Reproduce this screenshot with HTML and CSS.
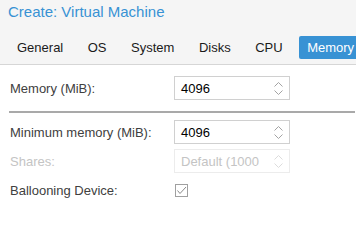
FILE: index.html
```html
<!DOCTYPE html>
<html>
<head>
<meta charset="utf-8">
<link rel="stylesheet" href="styles.css">
</head>
<body>
<div class="window">
  <div class="header">
    <div class="title">Create: Virtual Machine</div>
    <div class="tabs">
      <div class="tab">General</div>
      <div class="tab">OS</div>
      <div class="tab">System</div>
      <div class="tab">Disks</div>
      <div class="tab">CPU</div>
      <div class="tab active">Memory</div>
    </div>
  </div>
  <div class="content">
    <div class="row first">
      <div class="label">Memory (MiB):</div>
      <div class="field">
        <span class="value">4096</span>
        <span class="spin"><svg width="9" height="13" viewBox="0 0 9 13"><path d="M0.5 4.5 L4.5 0.5 L8.5 4.5 M0.5 8.5 L4.5 12.5 L8.5 8.5" fill="none" stroke="#a3a3a3" stroke-width="1"/></svg></span>
      </div>
    </div>
    <div class="sep"></div>
    <div class="row second">
      <div class="label">Minimum memory (MiB):</div>
      <div class="field">
        <span class="value">4096</span>
        <span class="spin"><svg width="9" height="13" viewBox="0 0 9 13"><path d="M0.5 4.5 L4.5 0.5 L8.5 4.5 M0.5 8.5 L4.5 12.5 L8.5 8.5" fill="none" stroke="#a3a3a3" stroke-width="1"/></svg></span>
      </div>
    </div>
    <div class="row">
      <div class="label disabled">Shares:</div>
      <div class="field off">
        <span class="value">Default (1000</span>
        <span class="spin"><svg width="9" height="13" viewBox="0 0 9 13"><path d="M0.5 4.5 L4.5 0.5 L8.5 4.5 M0.5 8.5 L4.5 12.5 L8.5 8.5" fill="none" stroke="#dcdcdc" stroke-width="1"/></svg></span>
      </div>
    </div>
    <div class="row">
      <div class="label">Ballooning Device:</div>
      <div class="check"><svg width="13" height="13" viewBox="0 0 13 13"><rect x="0.5" y="0.5" width="12" height="12" fill="#fff" stroke="#a0a0a0"/><path d="M2.5 6.5 L5 9.5 L11 3" fill="none" stroke="#8a8a8a" stroke-width="1"/></svg></div>
    </div>
  </div>
</div>
</body>
</html>
```
FILE: styles.css
```css
html, body {
  margin: 0;
  padding: 0;
  background: #ffffff;
  font-family: "Liberation Sans", Arial, sans-serif;
  font-size: 13px;
}
.window {
  width: 356px;
  height: 207px;
  overflow: hidden;
}
.header {
  background: #f5f5f5;
  padding-top: 2px;
  padding-bottom: 5px;
  border-bottom: 1px solid #d6d6d6;
}
.title {
  padding-left: 8px;
  font-size: 15px;
  line-height: 20px;
  color: #3892d4;
  white-space: nowrap;
}
.tabs {
  display: flex;
  gap: 8.5px;
  margin-top: 14px;
  padding-left: 9px;
  white-space: nowrap;
}
.tab {
  flex: none;
  padding: 0 8px;
  height: 23px;
  line-height: 23px;
  color: #1a1a1a;
  border-radius: 2px;
}
.tab.active {
  background: #3892d4;
  color: #ffffff;
}
.content {
  padding: 11px 0 0 10px;
}
.row {
  display: flex;
  align-items: center;
  height: 24px;
  margin-top: 5px;
}
.row.first {
  margin-top: 0;
}
.row.second {
  margin-top: 7px;
}
.label {
  width: 164px;
  flex: none;
  color: #404040;
  white-space: nowrap;
}
.label.disabled {
  color: #c4c4c4;
}
.sep {
  margin: 11px 1px 0 -1px;
  height: 2px;
  background: #a9a9a9;
}
.field {
  box-sizing: border-box;
  width: 116px;
  height: 24px;
  border: 1px solid #d0d0d0;
  background: #fff;
  display: flex;
  align-items: center;
}
.field.off {
  border-color: #ececec;
}
.value {
  flex: 1;
  min-width: 0;
  white-space: nowrap;
  padding-left: 6px;
  color: #000;
}
.field.off .value {
  color: #c4c4c4;
}
.spin {
  flex: none;
  width: 31px;
  height: 22px;
  display: flex;
  align-items: center;
  justify-content: flex-end;
  padding-right: 6px;
  box-sizing: border-box;
}
.spin svg {
  display: block;
}
.check {
  margin-left: 1px;
  display: flex;
}
.check svg {
  display: block;
}
```
